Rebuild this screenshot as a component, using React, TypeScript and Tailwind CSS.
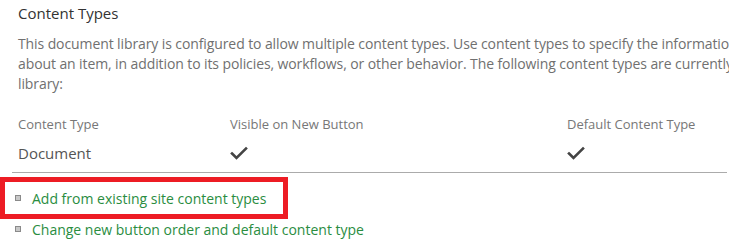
const font = { fontFamily: '"Open Sans", "Noto Sans", sans-serif' };

function Check() {
  return (
    <svg width="18" height="14" viewBox="0 0 18 14" className="block">
      <path d="M2 7.5 L6.5 12 L16 2.5" fill="none" stroke="#444" strokeWidth="2.6" strokeLinecap="square" />
    </svg>
  );
}

function Bullet() {
  return (
    <span className="block w-[6px] h-[6px] border border-[#8a8a8a] bg-[#c8c8c8] shrink-0" />
  );
}

export default function App() {
  const links = ['Add from existing site content types', 'Change new button order and default content type'];

  return (
    <div className="w-[729px] h-[243px] overflow-hidden bg-white" style={font}>
      <div className="w-[900px]">
        {/* title */}
        <div className="pl-[18px] pt-[2px] text-[15px] leading-[22px] text-[#333]">Content Types</div>

        {/* description */}
        <div className="pl-[18px] pt-[10px] text-[14px] leading-[20px] tracking-[-0.1px] text-[#707070] whitespace-nowrap">
          <div>This document library is configured to allow multiple content types. Use content types to specify the information you want to display</div>
          <div>about an item, in addition to its policies, workflows, or other behavior. The following content types are currently available in this</div>
          <div>library:</div>
        </div>

        {/* table */}
        <div className="w-[715px] ml-[12px] mt-[18px] border-b border-[#ababab]">
          <div className="flex items-center h-[26px] text-[13px] text-[#777]">
            <div className="w-[218px] pl-[6px]">Content Type</div>
            <div className="w-[337px]">Visible on New Button</div>
            <div>Default Content Type</div>
          </div>
          <div className="flex items-center h-[34px] pb-[4px] text-[15px] text-[#555]">
            <div className="w-[218px] pl-[6px]">Document</div>
            <div className="w-[337px]"><Check /></div>
            <div><Check /></div>
          </div>
        </div>

        {/* links */}
        <div className="pt-[4px]">
          <div className="w-[288px] h-[42px] border-[5px] border-[#ed1c24] flex items-center gap-[11px] pl-[10px]">
            <Bullet />
            <span className="text-[14px] text-[#2a8d3f] whitespace-nowrap">{links[0]}</span>
          </div>
          <div className="h-[22px] flex items-center gap-[11px] pl-[15px] pb-[2px]">
            <Bullet />
            <span className="text-[14px] text-[#2a8d3f] whitespace-nowrap">{links[1]}</span>
          </div>
        </div>
      </div>
    </div>
  );
}
